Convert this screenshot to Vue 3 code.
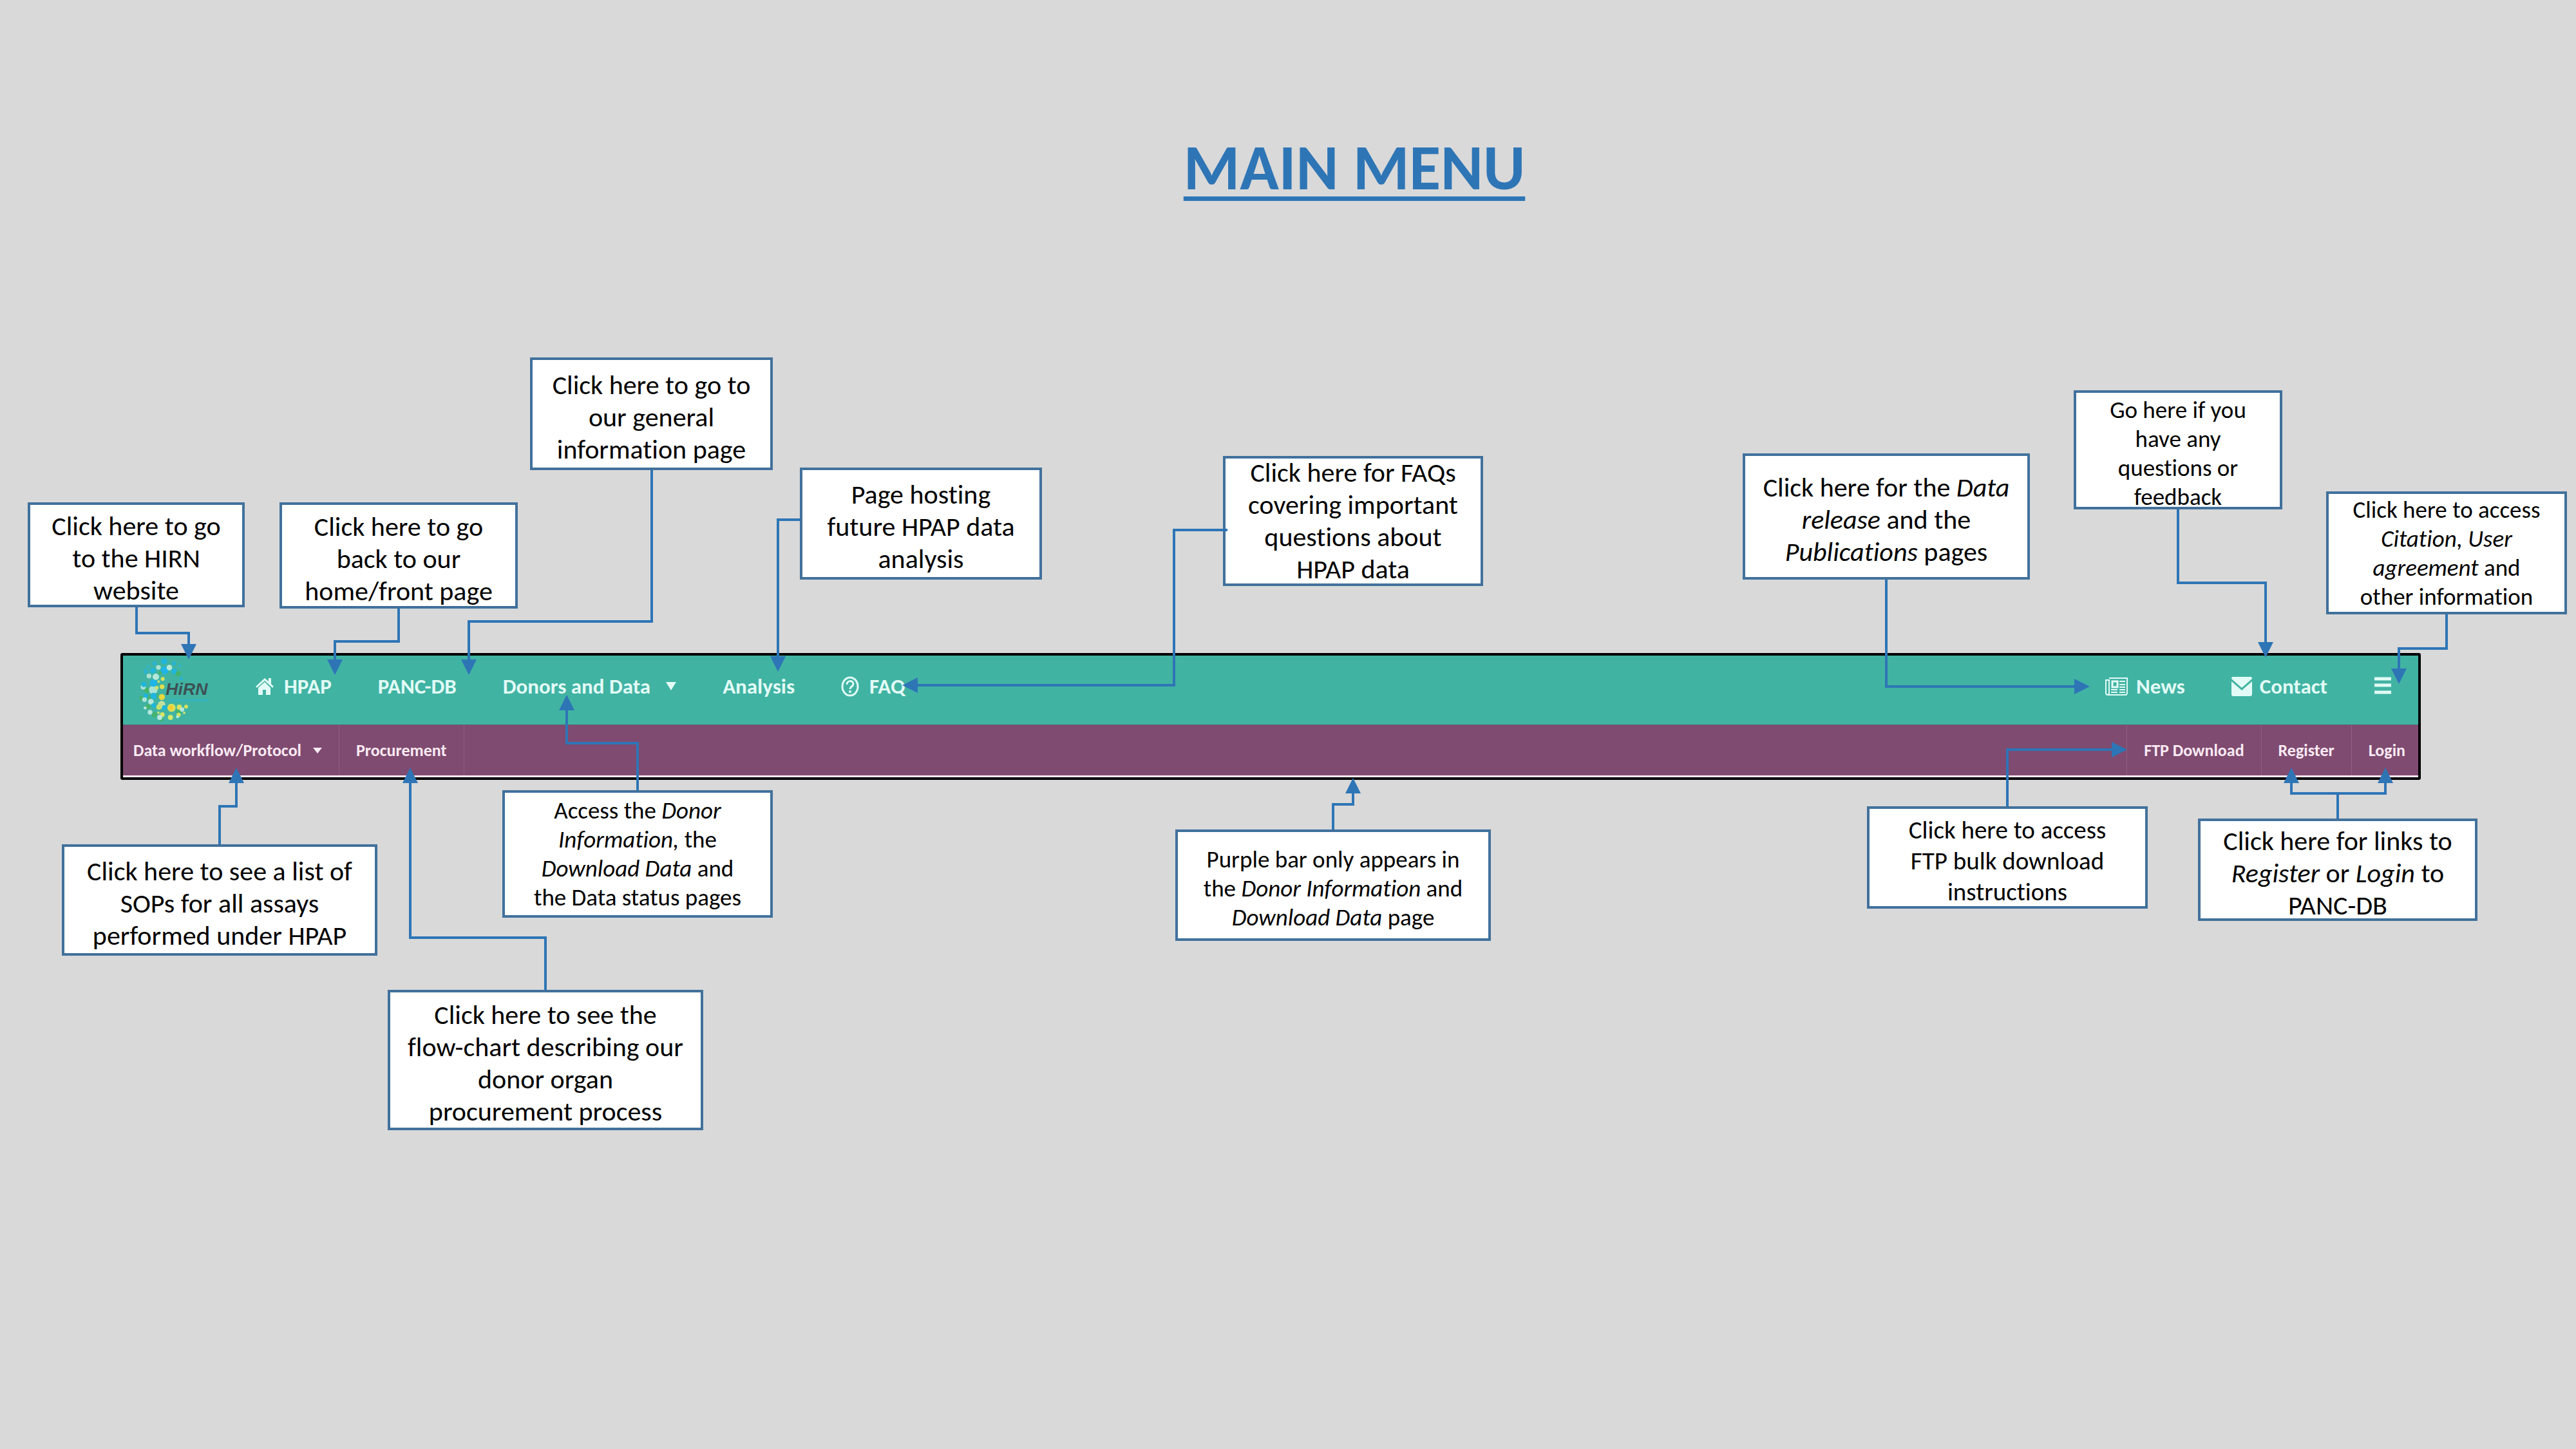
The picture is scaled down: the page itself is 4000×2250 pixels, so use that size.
<script setup>
const SLIDE_WIDTH = 4000

// Callout boxes on the slide: x/y/w/h in slide units, one array entry per text line.
// A line is a list of runs; runs with `i` are italic.
const t = (text) => ({ text })
const i = (text) => ({ text, i: true })

const callouts = [
  { id: 'hirn', x: 43, y: 780, w: 337, h: 163, size: 'large', lines: [[t('Click here to go')], [t('to the HIRN')], [t('website')]] },
  { id: 'home', x: 434, y: 780, w: 370, h: 165, size: 'large', lines: [[t('Click here to go')], [t('back to our')], [t('home/front page')]] },
  { id: 'general', x: 823, y: 555, w: 377, h: 175, size: 'large', lines: [[t('Click here to go to')], [t('our general')], [t('information page')]] },
  { id: 'analysis', x: 1242, y: 726, w: 376, h: 174, size: 'large', lines: [[t('Page hosting')], [t('future HPAP data')], [t('analysis')]] },
  { id: 'faq', x: 1899, y: 708, w: 404, h: 202, size: 'large', dense: true, lines: [[t('Click here for FAQs')], [t('covering important')], [t('questions about')], [t('HPAP data')]] },
  { id: 'news', x: 2706, y: 704, w: 446, h: 196, size: 'large', lines: [[t('Click here for the '), i('Data')], [i('release'), t(' and the')], [i('Publications'), t(' pages')]] },
  { id: 'contact', x: 3220, y: 606, w: 324, h: 185, size: 'small', lines: [[t('Go here if you')], [t('have any')], [t('questions or')], [t('feedback')]] },
  { id: 'more', x: 3612, y: 763, w: 374, h: 191, size: 'small', dense: true, lines: [[t('Click here to access')], [i('Citation, User')], [i('agreement'), t(' and')], [t('other information')]] },
  { id: 'protocol', x: 96, y: 1311, w: 490, h: 173, size: 'large', lines: [[t('Click here to see a list of')], [t('SOPs for all assays')], [t('performed under HPAP')]] },
  { id: 'procurement', x: 602, y: 1537, w: 490, h: 218, size: 'large', lines: [[t('Click here to see the')], [t('flow-chart describing our')], [t('donor organ')], [t('procurement process')]] },
  { id: 'donors', x: 780, y: 1227, w: 420, h: 198, size: 'small', dense: true, lines: [[t('Access the '), i('Donor')], [i('Information,'), t(' the')], [i('Download Data'), t(' and')], [t('the Data status pages')]] },
  { id: 'purple', x: 1825, y: 1288, w: 490, h: 173, size: 'small', lines: [[t('Purple bar only appears in')], [t('the '), i('Donor Information'), t(' and')], [i('Download Data'), t(' page')]] },
  { id: 'ftp', x: 2899, y: 1252, w: 436, h: 159, size: 'medium', lines: [[t('Click here to access')], [t('FTP bulk download')], [t('instructions')]] },
  { id: 'login', x: 3413, y: 1271, w: 434, h: 159, size: 'large', lines: [[t('Click here for links to')], [i('Register'), t(' or '), i('Login'), t(' to')], [t('PANC-DB')]] }
]

// Elbow connectors; each ends in an arrow head.
const connectors = [
  'M212 943V983H293V1002',
  'M619 945V996H520V1026',
  'M1012 730V965H728V1026',
  'M1242 807H1208V1021',
  'M1906 823H1823V1064H1423',
  'M2929 900V1066H3223',
  'M3382 791V905H3518V999',
  'M3799 954V1007H3725V1040',
  'M341 1311V1252H367V1214',
  'M847 1537V1456H637V1214',
  'M990 1227V1154H880V1101',
  'M2070 1288V1249H2101V1230',
  'M3117 1252V1164H3281',
  'M3630 1271V1232H3558V1214',
  'M3630 1232H3704V1214'
]

const place = (c) => ({
  left: `${(c.x / SLIDE_WIDTH) * 100}%`,
  top: `${c.y}px`,
  width: `${(c.w / SLIDE_WIDTH) * 100}%`,
  height: `${c.h}px`
})

// Dots of the logo's crescent: colour, centre, radius.
const dots = [
  ['#1fb5dd', 225, 50, 14], ['#2bb3cf', 180, 60, 10], ['#2bb3cf', 270, 60, 10], ['#35b5c4', 150, 74, 8], ['#35b5c4', 298, 72, 8],
  ['#1fb5e6', 226, 93, 18], ['#1fb5dd', 172, 94, 13], ['#1fb5dd', 272, 97, 13], ['#2bb3cf', 139, 98, 10], ['#2bb3cf', 305, 132, 8],
  ['#45b36b', 290, 108, 12], ['#45b36b', 206, 104, 8], ['#45b36b', 144, 186, 13], ['#45b36b', 118, 222, 10], ['#45b36b', 150, 262, 11],
  ['#45b36b', 180, 300, 12], ['#45b36b', 292, 284, 12], ['#45b36b', 212, 322, 9], ['#45b36b', 156, 218, 9], ['#45b36b', 186, 210, 12],
  ['#a9e3d6', 198, 79, 11], ['#b5e8da', 249, 80, 13], ['#a9e3d6', 154, 119, 11], ['#b5e8da', 186, 123, 15], ['#a9e3d6', 127, 170, 12],
  ['#a9e3d6', 174, 184, 20], ['#1fb5e6', 175, 152, 17], ['#1fb5dd', 130, 158, 12], ['#1fb5dd', 176, 212, 15], ['#1fb5dd', 139, 212, 11],
  ['#d3e35a', 218, 133, 9], ['#c6e070', 199, 145, 6], ['#e3dd4a', 215, 169, 11], ['#c6e070', 190, 174, 9], ['#e8d83c', 214, 217, 14],
  ['#a9e3d6', 133, 229, 11], ['#b5e8da', 163, 239, 13], ['#1fb5dd', 176, 256, 11], ['#c2dfa0', 213, 252, 17], ['#c6e070', 200, 264, 12],
  ['#1fb5dd', 226, 266, 11], ['#d8e35e', 259, 267, 19], ['#f0cf35', 257, 267, 12], ['#d8e35e', 295, 264, 12], ['#b5e8da', 308, 275, 10],
  ['#d8e35e', 327, 262, 9], ['#b5e8da', 136, 268, 7], ['#b5e8da', 159, 288, 11], ['#d8e35e', 216, 299, 11], ['#b5e8da', 204, 312, 12],
  ['#c6e070', 198, 290, 6], ['#d3e96a', 254, 312, 12], ['#d3e35a', 292, 300, 10], ['#b5e8da', 287, 309, 7], ['#c6e070', 318, 291, 6]
]
</script>

<template>
  <main class="slide">
    <h1 class="title">MAIN MENU</h1>

    <div class="menu">
      <nav class="bar primary" aria-label="Main menu">
        <a href="#" class="logo" aria-label="HIRN">
          <svg viewBox="105 39 330 294" width="110" height="98">
            <circle v-for="(d, n) in dots" :key="n" :fill="d[0]" :cx="d[1]" :cy="d[2]" :r="d[3]" />
            <rect x="246" y="228" width="186" height="8" fill="#35b5c0" />
            <text x="232" y="206" class="logo-text">HiRN</text>
          </svg>
        </a>
        <a href="#" class="wide">
          <svg viewBox="0 0 28 27" width="28" height="27" class="icon">
            <path d="M14 1 0 14l2 2L14 5l12 11 2-2-4-4V1h-4v5z" fill="currentColor" />
            <path d="M14 7 4 16v11h7v-8h5v8h7V16z" fill="currentColor" />
          </svg>
          HPAP
        </a>
        <a href="#">PANC-DB</a>
        <a href="#" class="drop">Donors and Data <span class="caret"></span></a>
        <a href="#">Analysis</a>
        <a href="#" class="wide">
          <svg viewBox="0 0 28 32" width="28" height="32" class="icon">
            <ellipse cx="14" cy="16" rx="12" ry="14" fill="none" stroke="currentColor" stroke-width="3" />
            <path d="M9 13c0-7 10-7 10-1 0 4-5 4-5 8" fill="none" stroke="currentColor" stroke-width="3" />
            <circle cx="14" cy="24" r="2" fill="currentColor" />
          </svg>
          FAQ
        </a>
        <span class="spacer"></span>
        <a href="#">
          <svg viewBox="0 0 36 30" width="36" height="30" class="icon">
            <path d="M6 2h28v23q0 3-3 3H4q-3 0-3-3V5h5v20q0 3-2 3" fill="none" stroke="currentColor" stroke-width="2" />
            <rect x="11" y="7" width="8" height="9" fill="none" stroke="currentColor" stroke-width="3" />
            <path d="M22 7h9M22 12h9M22 16h9M9 20h10M22 20h9M9 24h10M22 24h9" stroke="currentColor" stroke-width="2" />
          </svg>
          News
        </a>
        <a href="#">
          <svg viewBox="0 0 32 30" width="32" height="30" class="icon">
            <path d="M2 0h28q2 0 2 3L16 17 0 3q0-3 2-3z" fill="currentColor" />
            <path d="M0 7l16 14L32 7v20q0 3-3 3H3q-3 0-3-3z" fill="currentColor" />
          </svg>
          Contact
        </a>
        <button type="button" class="burger" aria-label="More">
          <svg viewBox="0 0 28 27" width="28" height="27" class="icon">
            <path d="M1 3h26M1 13h26M1 24h26" stroke="currentColor" stroke-width="5" />
          </svg>
        </button>
      </nav>

      <nav class="bar secondary" aria-label="Data menu">
        <a href="#" class="first">Data workflow/Protocol <span class="caret"></span></a>
        <a href="#">Procurement</a>
        <span class="spacer"></span>
        <a href="#">FTP Download</a>
        <a href="#">Register</a>
        <a href="#" class="last">Login</a>
      </nav>
    </div>

    <p
      v-for="c in callouts"
      :key="c.id"
      class="callout"
      :class="[c.size, { dense: c.dense }]"
      :style="place(c)"
    >
      <span v-for="(line, n) in c.lines" :key="n" class="line">
        <template v-for="(run, m) in line" :key="m"><em v-if="run.i">{{ run.text }}</em><template v-else>{{ run.text }}</template></template>
      </span>
    </p>

    <svg class="connectors" viewBox="0 0 4000 2250" preserveAspectRatio="none" aria-hidden="true">
      <defs>
        <marker id="head" markerUnits="userSpaceOnUse" markerWidth="24" markerHeight="24" refX="2" refY="12" orient="auto">
          <path d="M0 0 24 12 0 24z" fill="#2e75b6" />
        </marker>
      </defs>
      <path v-for="d in connectors" :key="d" :d="d" marker-end="url(#head)" />
    </svg>
  </main>
</template>

<style>
body {
  margin: 0;
  background: #d9d9d9;
}
</style>

<style scoped>
.slide {
  position: relative;
  box-sizing: border-box;
  min-height: 2250px;
  padding: 206px 241px 0 187px;
  overflow: hidden;
  background: #d9d9d9;
  color: #000;
  font-family: Carlito, Lato, "Liberation Sans", sans-serif;
  font-variant-ligatures: none;
}

.title {
  margin: 0 0 700px;
  padding-left: 260px;
  color: #2e75b6;
  font-size: 100px;
  font-weight: 700;
  line-height: 108px;
  text-align: center;
  text-decoration: underline;
  text-decoration-thickness: 7px;
  text-underline-offset: 11px;
  text-decoration-skip-ink: none;
}

.menu {
  border: 4px solid #000;
  border-radius: 3px;
  background: #fbe9f6;
}

.bar {
  display: flex;
  align-items: stretch;
  font-weight: 700;
  white-space: nowrap;
}

.bar a {
  display: flex;
  align-items: center;
  color: inherit;
  text-decoration: none;
}

.spacer {
  flex: 1;
}

.primary {
  gap: 72px;
  height: 107px;
  padding: 0 41px 0 24px;
  background: #41b3a3;
  color: #e2fbf6;
  font-size: 33px;
}

.primary a {
  gap: 12px;
  padding-bottom: 12px;
}

.primary .wide {
  gap: 16px;
}

.primary .logo {
  padding: 0;
}

.primary .drop {
  gap: 24px;
}

.logo-text {
  fill: #3d5154;
  font: italic 700 80px "Liberation Sans", sans-serif;
}

.icon {
  display: block;
  flex: none;
}

.burger {
  padding: 0 0 14px;
  border: 0;
  background: none;
  color: inherit;
}

.caret {
  border: 8px solid transparent;
  border-top: 13px solid currentColor;
  border-bottom: 0;
}

.secondary {
  height: 79px;
  margin-bottom: 3px;
  background: #7f4b70;
  border-top: 1px solid #5f6275;
  box-sizing: border-box;
  color: #faeaf4;
  font-size: 26px;
}

.secondary a {
  gap: 18px;
  padding: 0 26px;
  border-left: 1px solid #8f5f82;
}

.secondary .spacer {
  border-left: 1px solid #8f5f82;
}

.secondary .first {
  padding-left: 16px;
  border-left: 0;
}

.secondary .last {
  padding-right: 20px;
}

.secondary .caret {
  border-width: 9px 7px 0;
}

.callout {
  position: absolute;
  display: flex;
  flex-direction: column;
  justify-content: center;
  box-sizing: border-box;
  margin: 0;
  padding-top: 10px;
  border: 4px solid #41719c;
  background: #fff;
  text-align: center;
  white-space: nowrap;
}

.callout.dense {
  padding-top: 0;
}

.line {
  flex: none;
}

.large {
  font-size: 42px;
  line-height: 50px;
}

.medium {
  font-size: 39px;
  line-height: 48px;
}

.small {
  font-size: 37px;
  line-height: 45px;
}

.connectors {
  position: absolute;
  inset: 0;
  width: 100%;
  height: 2250px;
  fill: none;
  stroke: #2e75b6;
  stroke-width: 4px;
  pointer-events: none;
}

.connectors marker path {
  stroke: none;
}
</style>
